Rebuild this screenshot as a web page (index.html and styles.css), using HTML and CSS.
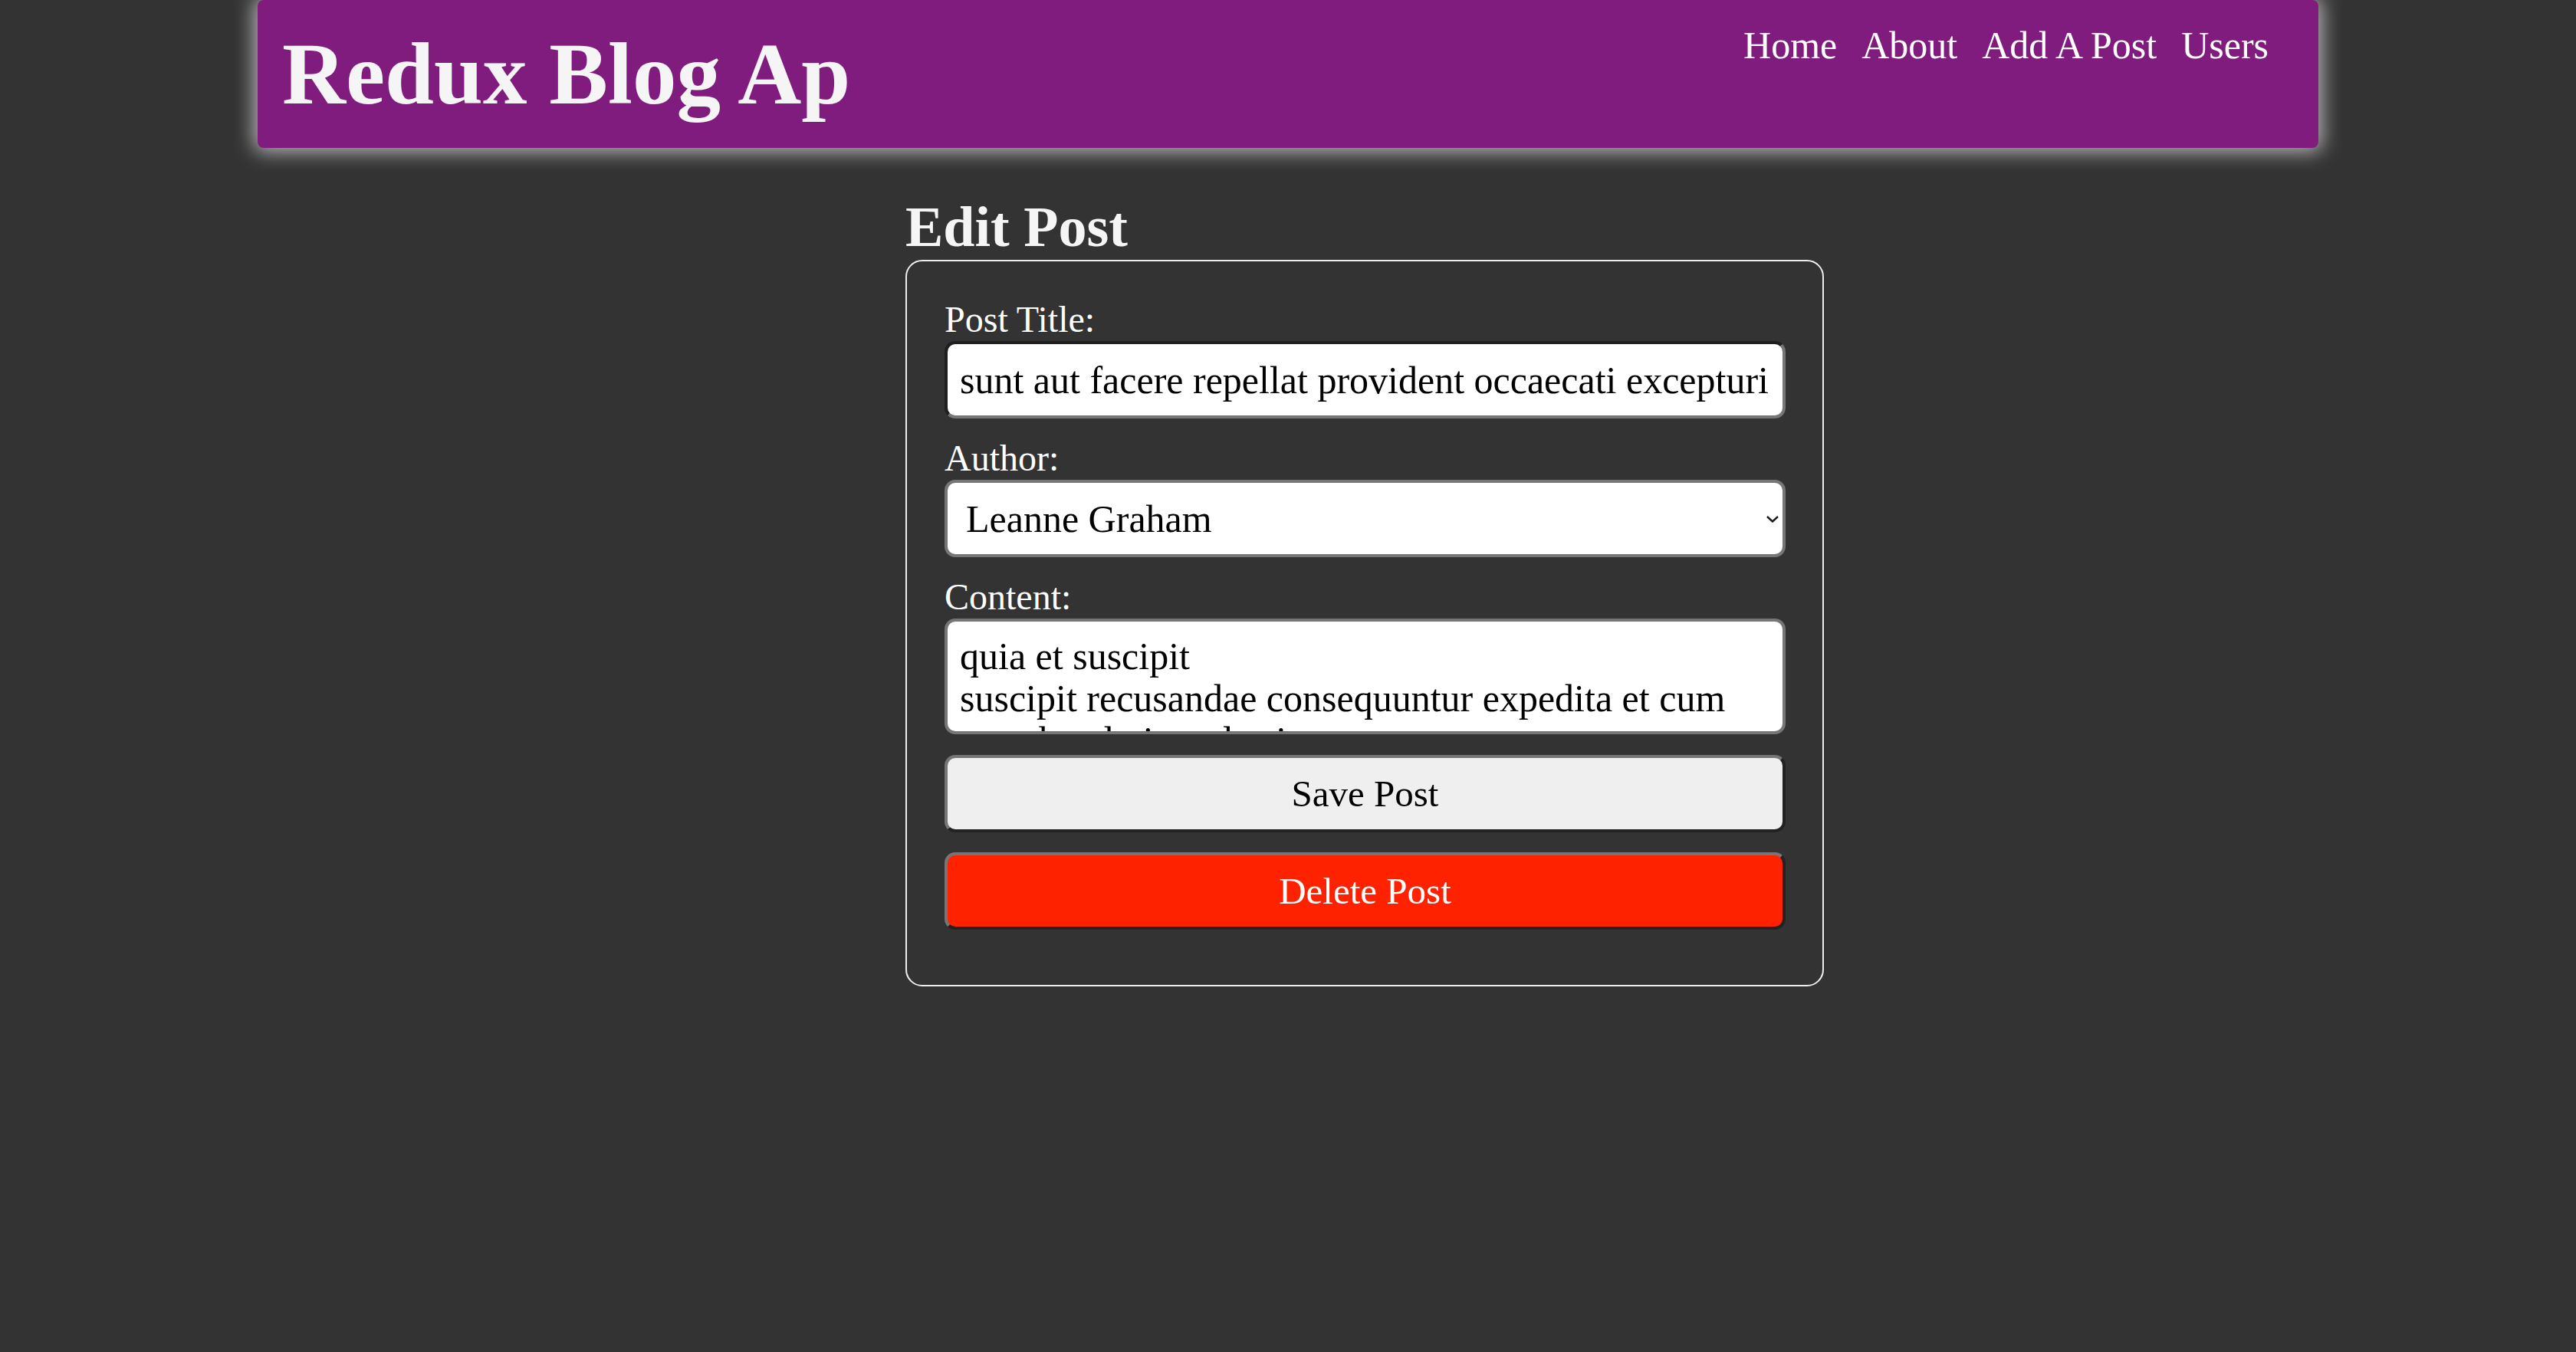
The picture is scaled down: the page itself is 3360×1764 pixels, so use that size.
FILE: index.html
```html
<!DOCTYPE html>
<html lang="en">
<head>
<meta charset="utf-8">
<title>Redux Blog Ap</title>
<link rel="stylesheet" href="styles.css">
</head>
<body>
<header class="header">
  <h1 class="brand">Redux Blog Ap</h1>
  <nav>
    <ul class="nav-list">
      <li><a href="#">Home</a></li>
      <li><a href="#">About</a></li>
      <li><a href="#">Add A Post</a></li>
      <li><a href="#">Users</a></li>
    </ul>
  </nav>
</header>
<main class="main">
  <section class="edit">
    <h2 class="edit-title">Edit Post</h2>
    <form class="form">
      <label class="label" for="postTitle">Post Title:</label>
      <input class="field input" id="postTitle" type="text" value="sunt aut facere repellat provident occaecati excepturi optio reprehenderit">
      <label class="label" for="postAuthor">Author:</label>
      <div class="select-wrap">
        <select class="field select" id="postAuthor">
          <option>Leanne Graham</option>
          <option>Ervin Howell</option>
        </select>
        <svg class="chev" width="18" height="10" viewBox="0 0 18 10"><path d="M2 2 L9 8.5 L16 2" fill="none" stroke="#1a1a1a" stroke-width="2.4"/></svg>
      </div>
      <label class="label" for="postContent">Content:</label>
      <textarea class="field textarea" id="postContent">quia et suscipit
suscipit recusandae consequuntur expedita et cum
reprehenderit molestiae ut ut quas totam
nostrum rerum est autem sunt rem eveniet architecto</textarea>
      <button class="btn btn-save" type="button">Save Post</button>
      <button class="btn btn-delete" type="button">Delete Post</button>
    </form>
  </section>
</main>
</body>
</html>
```
FILE: styles.css
```css
* { box-sizing: border-box; }
html, body { margin: 0; padding: 0; }
body {
  background: #333333;
  color: #f5f5f5;
  font-family: "Liberation Serif", "Times New Roman", serif;
  min-height: 1764px;
}
.header {
  width: 80%;
  margin: 0 auto;
  background: #811c7f;
  padding: 32px;
  border-radius: 8px;
  box-shadow: 0 0 26px 5px #b8b8b8;
  display: flex;
  justify-content: space-between;
  align-items: flex-start;
}
.brand {
  margin: 0;
  font-size: 115px;
  line-height: 129px;
  font-weight: bold;
  color: #f5f5f5;
}
.nav-list {
  list-style: none;
  margin: 0;
  padding: 0 33px 0 0;
  display: flex;
  gap: 32px;
  font-size: 50px;
  line-height: 55px;
}
.nav-list a {
  color: #ffffff;
  text-decoration: none;
}
.main {
  display: flex;
  justify-content: center;
  padding-left: 200px;
}
.edit {
  width: 1198px;
}
.edit-title {
  margin: 63px 0 3px;
  font-size: 74px;
  line-height: 80px;
  font-weight: bold;
  color: #f5f5f5;
}
.form {
  border: 2px solid #eeeeee;
  border-radius: 22px;
  padding: 48px 48px 46px 49px;
  display: flex;
  flex-direction: column;
}
.label {
  font-size: 48px;
  line-height: 56px;
  color: #ffffff;
}
.field {
  display: block;
  width: 100%;
  font-family: "Liberation Serif", "Times New Roman", serif;
  font-size: 50px;
  color: #000;
  background: #fff;
  border-radius: 14px;
  margin: 0 0 24px;
}
.input {
  height: 101px;
  padding: 0 16px;
  border: 4px solid;
  border-color: #1f1f1f #767676 #767676 #1f1f1f;
}
.select-wrap {
  position: relative;
  margin: 0 0 24px;
}
.select {
  height: 101px;
  margin: 0;
  padding: 0 24px;
  border: 4px solid #767676;
  appearance: none;
  -webkit-appearance: none;
}
.chev {
  position: absolute;
  right: 8px;
  top: 46px;
  pointer-events: none;
}
.textarea {
  height: 151px;
  padding: 18px 16px;
  line-height: 55px;
  border: 4px solid #767676;
  resize: none;
  overflow: hidden;
  margin-bottom: 27px;
}
.btn {
  display: block;
  width: 100%;
  height: 101px;
  font-family: "Liberation Serif", "Times New Roman", serif;
  font-size: 49px;
  border-radius: 14px;
  border: 4px solid;
  border-color: #767676 #222222 #222222 #767676;
  margin: 0 0 26px;
}
.btn-save {
  background: #efefef;
  color: #000;
}
.btn-delete {
  background: #ff2200;
  color: #fff;
}
```
